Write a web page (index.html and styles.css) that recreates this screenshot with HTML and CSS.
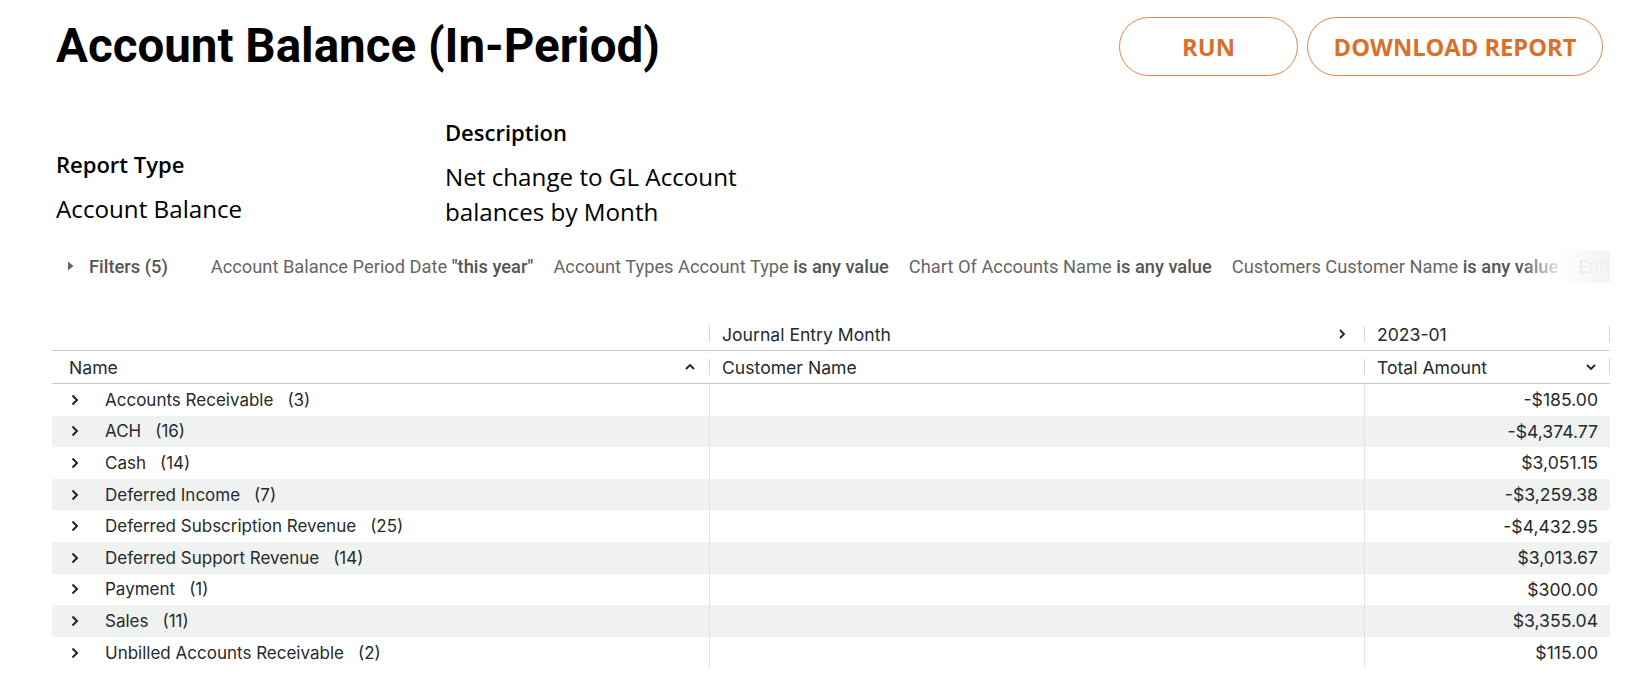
FILE: index.html
```html
<!DOCTYPE html>
<html lang="en">
<head>
    <meta charset="UTF-8">
    <title>Account Balance (In-Period)</title>
    <link rel="stylesheet" href="styles.css">
</head>
<body>
<div class="page">

    <header class="top">
        <h1 class="title">Account Balance (In-Period)</h1>
        <div class="actions">
            <button class="btn btn-run">RUN</button>
            <button class="btn btn-download">DOWNLOAD REPORT</button>
        </div>
    </header>

    <section class="meta">
        <div class="meta-col meta-type">
            <div class="meta-label">Report Type</div>
            <div class="meta-value">Account Balance</div>
        </div>
        <div class="meta-col meta-desc">
            <div class="meta-label">Description</div>
            <div class="meta-value">Net change to GL Account balances by Month</div>
        </div>
    </section>

    <div class="filters">
        <span class="filters-toggle">
            <svg width="8" height="10" viewBox="0 0 8 10"><path d="M1 0.5 L6.5 5 L1 9.5 Z" fill="#666"/></svg>
            <b>Filters (5)</b>
        </span>
        <span class="filter">Account Balance Period Date <b>"this year"</b></span>
        <span class="filter">Account Types Account Type <b>is any value</b></span>
        <span class="filter">Chart Of Accounts Name <b>is any value</b></span>
        <span class="filter">Customers Customer Name <b>is any value</b></span>
        <span class="filter">Entries Journal Entry Month <b>is any value</b></span>
        <div class="filters-fade"></div>
    </div>

    <div class="grid">
        <div class="grid-row head head-pivot">
            <div class="cell"></div>
            <div class="cell">
                <div class="tick">Journal Entry Month
                    <svg class="ico ico-right" width="12" height="14" viewBox="0 0 12 14"><path d="M4 3 L8 7 L4 11" fill="none" stroke="#222" stroke-width="1.8"/></svg>
                </div>
            </div>
            <div class="cell">
                <div class="tick tick-end">2023-01</div>
            </div>
        </div>
        <div class="grid-row head head-cols">
            <div class="cell cell-name">Name
                <svg class="ico ico-up" width="14" height="12" viewBox="0 0 14 12"><path d="M3 8 L7 4 L11 8" fill="none" stroke="#222" stroke-width="1.8"/></svg>
            </div>
            <div class="cell">
                <div class="tick">Customer Name</div>
            </div>
            <div class="cell">
                <div class="tick tick-end">Total Amount
                    <svg class="ico ico-down" width="14" height="12" viewBox="0 0 14 12"><path d="M3 4 L7 8 L11 4" fill="none" stroke="#222" stroke-width="1.8"/></svg>
                </div>
            </div>
        </div>

        <div class="grid-row">
            <div class="cell cell-name"><svg class="expand" width="12" height="14" viewBox="0 0 12 14"><path d="M3.5 2.5 L8 7 L3.5 11.5" fill="none" stroke="#222" stroke-width="2"/></svg>Accounts Receivable<span class="count">(3)</span></div>
            <div class="cell"></div>
            <div class="cell cell-amount">-$185.00</div>
        </div>
        <div class="grid-row">
            <div class="cell cell-name"><svg class="expand" width="12" height="14" viewBox="0 0 12 14"><path d="M3.5 2.5 L8 7 L3.5 11.5" fill="none" stroke="#222" stroke-width="2"/></svg>ACH<span class="count">(16)</span></div>
            <div class="cell"></div>
            <div class="cell cell-amount">-$4,374.77</div>
        </div>
        <div class="grid-row">
            <div class="cell cell-name"><svg class="expand" width="12" height="14" viewBox="0 0 12 14"><path d="M3.5 2.5 L8 7 L3.5 11.5" fill="none" stroke="#222" stroke-width="2"/></svg>Cash<span class="count">(14)</span></div>
            <div class="cell"></div>
            <div class="cell cell-amount">$3,051.15</div>
        </div>
        <div class="grid-row">
            <div class="cell cell-name"><svg class="expand" width="12" height="14" viewBox="0 0 12 14"><path d="M3.5 2.5 L8 7 L3.5 11.5" fill="none" stroke="#222" stroke-width="2"/></svg>Deferred Income<span class="count">(7)</span></div>
            <div class="cell"></div>
            <div class="cell cell-amount">-$3,259.38</div>
        </div>
        <div class="grid-row">
            <div class="cell cell-name"><svg class="expand" width="12" height="14" viewBox="0 0 12 14"><path d="M3.5 2.5 L8 7 L3.5 11.5" fill="none" stroke="#222" stroke-width="2"/></svg>Deferred Subscription Revenue<span class="count">(25)</span></div>
            <div class="cell"></div>
            <div class="cell cell-amount">-$4,432.95</div>
        </div>
        <div class="grid-row">
            <div class="cell cell-name"><svg class="expand" width="12" height="14" viewBox="0 0 12 14"><path d="M3.5 2.5 L8 7 L3.5 11.5" fill="none" stroke="#222" stroke-width="2"/></svg>Deferred Support Revenue<span class="count">(14)</span></div>
            <div class="cell"></div>
            <div class="cell cell-amount">$3,013.67</div>
        </div>
        <div class="grid-row">
            <div class="cell cell-name"><svg class="expand" width="12" height="14" viewBox="0 0 12 14"><path d="M3.5 2.5 L8 7 L3.5 11.5" fill="none" stroke="#222" stroke-width="2"/></svg>Payment<span class="count">(1)</span></div>
            <div class="cell"></div>
            <div class="cell cell-amount">$300.00</div>
        </div>
        <div class="grid-row">
            <div class="cell cell-name"><svg class="expand" width="12" height="14" viewBox="0 0 12 14"><path d="M3.5 2.5 L8 7 L3.5 11.5" fill="none" stroke="#222" stroke-width="2"/></svg>Sales<span class="count">(11)</span></div>
            <div class="cell"></div>
            <div class="cell cell-amount">$3,355.04</div>
        </div>
        <div class="grid-row">
            <div class="cell cell-name"><svg class="expand" width="12" height="14" viewBox="0 0 12 14"><path d="M3.5 2.5 L8 7 L3.5 11.5" fill="none" stroke="#222" stroke-width="2"/></svg>Unbilled Accounts Receivable<span class="count">(2)</span></div>
            <div class="cell"></div>
            <div class="cell cell-amount">$115.00</div>
        </div>
    </div>

</div>
</body>
</html>
```

FILE: styles.css
```css
body {
    margin: 0;
    background: #fff;
    color: #000;
    font-family: 'Open Sans', sans-serif;
    overflow: hidden;
}
.page {
    padding: 17px 20px 0 52px;
}

/* header */
.top {
    display: flex;
    justify-content: space-between;
    align-items: flex-start;
    padding-left: 4px;
}
.title {
    margin: 0;
    font-family: 'Roboto', sans-serif;
    font-weight: 700;
    font-size: 47.5px;
    line-height: 58px;
    color: #000;
}
.actions {
    display: flex;
    gap: 9px;
    margin-right: 7px;
}
.btn {
    height: 59px;
    border: 1px solid #e08448;
    border-radius: 30px;
    background: #fff;
    color: #d9702b;
    font-family: 'Open Sans', sans-serif;
    font-weight: 700;
    font-size: 23.7px;
    cursor: pointer;
}
.btn-run {
    width: 179px;
}
.btn-download {
    width: 296px;
}

/* report meta */
.meta {
    display: flex;
    align-items: flex-end;
    margin-top: 41px;
    padding-left: 4px;
}
.meta-col {
    display: flex;
    flex-direction: column;
}
.meta-type {
    width: 389px;
    padding-bottom: 3px;
}
.meta-desc {
    width: 305px;
}
.meta-label {
    font-weight: 600;
    font-size: 22px;
    line-height: 30px;
    margin-bottom: 12px;
}
.meta-value {
    font-size: 24.2px;
    line-height: 35px;
}

/* filters */
.filters {
    position: relative;
    display: flex;
    align-items: center;
    gap: 20px;
    height: 34px;
    margin-top: 20px;
    padding-left: 15px;
    overflow: hidden;
    white-space: nowrap;
    font-family: 'Roboto', sans-serif;
    font-size: 18.3px;
    color: #666;
}
.filters b {
    font-weight: 500;
    color: #555;
}
.filters-toggle {
    display: flex;
    align-items: center;
    gap: 14px;
    margin-right: 23px;
}
.filters-fade {
    position: absolute;
    top: 1px;
    right: 0;
    bottom: 0;
    width: 90px;
    border-radius: 4px;
    background: linear-gradient(to right, rgba(255, 255, 255, 0), rgba(255, 255, 255, 0.8) 40%, #f3f3f3);
}

/* table */
.grid {
    margin-top: 35px;
    font-family: 'Inter', sans-serif;
    font-size: 17.6px;
    color: #262a2e;
}
.grid-row {
    display: grid;
    grid-template-columns: 657px 655px 246px;
    height: 31.6px;
}
.grid-row:nth-child(2n+4) {
    background: #f0f1f1;
}
.head {
    height: 32px;
}
.head-pivot {
    border-bottom: 1px solid #c9c9c9;
}
.head-cols {
    border-bottom: 1px solid #c9c9c9;
}
.cell {
    display: flex;
    align-items: center;
    min-width: 0;
    border-left: 1px solid #e2e2e2;
}
.cell:first-child {
    border-left: none;
}
.head .cell {
    border-left: none;
}
.tick {
    flex: 1;
    display: flex;
    align-items: center;
    height: 16px;
    padding-left: 12px;
    border-left: 1px solid #d6d6d6;
}
.tick-end {
    border-right: 1px solid #d6d6d6;
}
.cell-name {
    padding-left: 17px;
}
.grid-row:not(.head) .cell-name {
    padding-left: 17px;
    font-size: 17px;
}
.head-cols .cell-name {
    padding-right: 12px;
}
.ico {
    margin-left: auto;
}
.ico-right {
    margin-right: 16px;
}
.ico-down {
    margin-right: 11px;
}
.expand {
    margin: 0 24px 0 0;
}
.count {
    margin-left: 14px;
}
.cell-amount {
    justify-content: flex-end;
    padding-right: 12px;
}
```
